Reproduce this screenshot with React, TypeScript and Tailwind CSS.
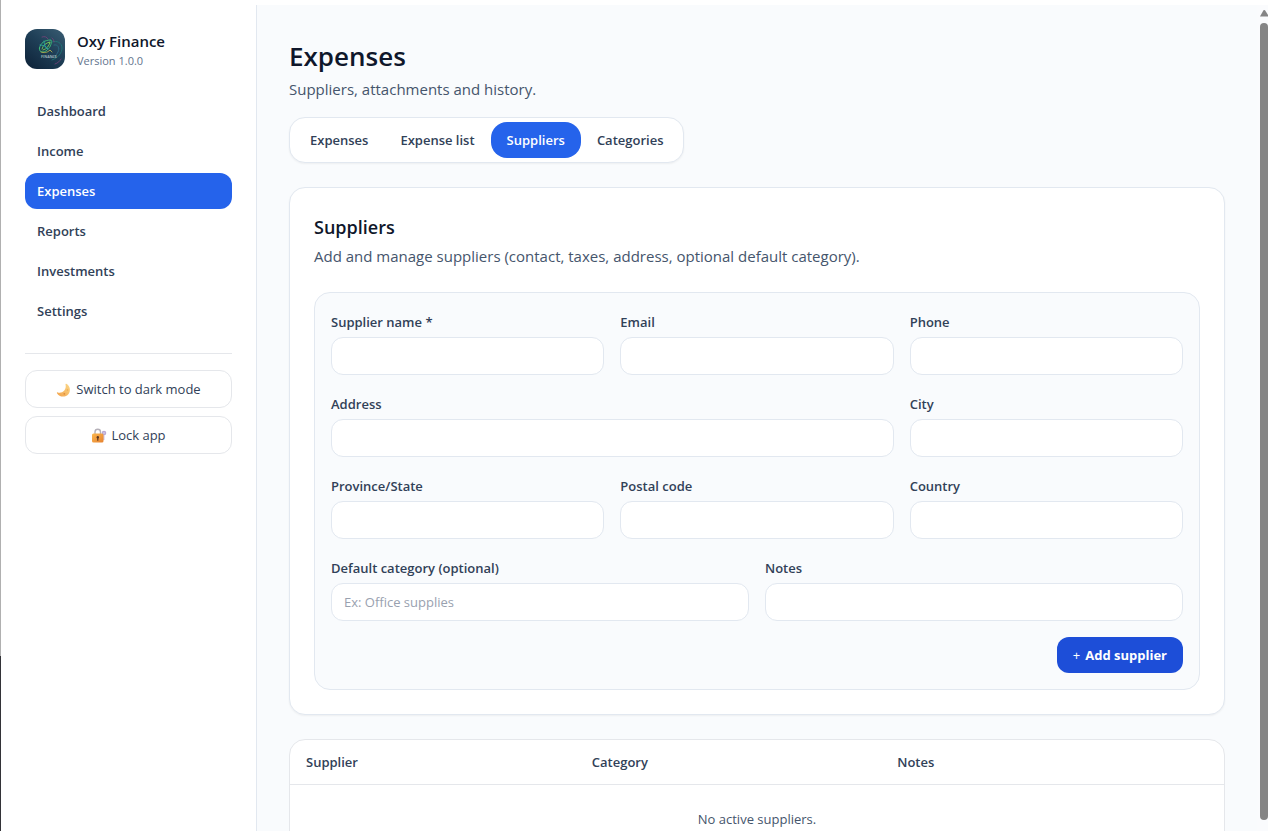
import type { ReactNode } from "react";

const navItems = ["Dashboard", "Income", "Expenses", "Reports", "Investments", "Settings"];
const tabs = ["Expenses", "Expense list", "Suppliers", "Categories"];

type FieldProps = {
  id: string;
  label: string;
  span: string;
  placeholder?: string;
  type?: string;
};

const fields: FieldProps[] = [
  { id: "name", label: "Supplier name *", span: "col-span-2" },
  { id: "email", label: "Email", span: "col-span-2", type: "email" },
  { id: "phone", label: "Phone", span: "col-span-2", type: "tel" },
  { id: "address", label: "Address", span: "col-span-4" },
  { id: "city", label: "City", span: "col-span-2" },
  { id: "province", label: "Province/State", span: "col-span-2" },
  { id: "postal", label: "Postal code", span: "col-span-2" },
  { id: "country", label: "Country", span: "col-span-2" },
  { id: "category", label: "Default category (optional)", span: "col-span-3", placeholder: "Ex: Office supplies" },
  { id: "notes", label: "Notes", span: "col-span-3" },
];

function Logo() {
  return (
    <svg viewBox="0 0 40 40" className="size-10 shrink-0 rounded-xl" aria-hidden="true">
      <defs>
        <linearGradient id="logo-bg" x1="1" y1="0" x2="0.2" y2="1">
          <stop offset="0" stopColor="#3a5d73" />
          <stop offset="0.5" stopColor="#1f3f57" />
          <stop offset="1" stopColor="#10263c" />
        </linearGradient>
      </defs>
      <rect width="40" height="40" fill="url(#logo-bg)" />
      <g fill="none" strokeWidth="0.9" strokeLinecap="round">
        <path d="M27 13c5-2 10 1 10 6s-4 10-10 12" stroke="#1f7f7a" opacity="0.85" />
        <path d="M29 16c4-1 6 3 4 7s-4 5-7 6" stroke="#2f7590" opacity="0.8" />
        <path d="M17 8c3-1 5 0 6 2M27 9c1 1 2 2 2 4M30 35c3-1 5-3 6-5" stroke="#8a4380" opacity="0.75" />
        <path d="M14.500 19c1-5 5-8 11.500-8 1 4-1 8-5 11-4 2-7 1-6.500-3z" stroke="#3fc07a" />
        <path d="M17 20c1-4 4-6 8-7-1 4-3 7-7 8" stroke="#7bcf55" />
        <path d="M15 16c3 0 6 1 8 4M19 12c0 3 1 6 3 8" stroke="#2ba5a0" />
        <path d="M16 23c3 1 6 1 9-2l2 2" stroke="#b0b04c" />
      </g>
      <text x="24" y="28.600" textAnchor="middle" fontSize="3.600" fontWeight="700" fill="#9db4b8" fontFamily="Open Sans, sans-serif">
        FINANCE
      </text>
    </svg>
  );
}

function MoonIcon() {
  return (
    <svg viewBox="0 0 16 16" className="size-4 shrink-0" aria-hidden="true">
      <defs>
        <linearGradient id="moon" x1="0" y1="1" x2="1" y2="0">
          <stop offset="0" stopColor="#f2a24a" />
          <stop offset="1" stopColor="#fbd98a" />
        </linearGradient>
      </defs>
      <path d="M10.200 1.700c3.900 1.800 4.900 7 2.400 10.200-3.100 3.800-9.200 3.500-11.600-.7-.3-.5.100-1 .7-.8 2.400.7 4.800.1 6.400-1.700 1.600-1.800 2-4.100 1.400-6.400-.1-.5.300-.8.700-.6z" fill="url(#moon)" />
      <circle cx="11.500" cy="8" r="0.800" fill="#eda850" />
      <circle cx="8.300" cy="11.800" r="0.900" fill="#e08d3c" />
    </svg>
  );
}

function LockIcon() {
  return (
    <svg viewBox="0 0 16 16" className="size-4 shrink-0" aria-hidden="true">
      <defs>
        <linearGradient id="lock" x1="0" y1="0" x2="1" y2="1">
          <stop offset="0" stopColor="#fbb84f" />
          <stop offset="1" stopColor="#e6812f" />
        </linearGradient>
      </defs>
      <circle cx="13" cy="5" r="1.700" fill="#cfc3e0" stroke="#b9a8d4" strokeWidth="1.200" />
      <path d="M12.800 7v5" stroke="#c9bbdd" strokeWidth="1.300" />
      <path d="M4 7V4a2.700 2.700 0 0 1 5.500 0V7" fill="none" stroke="#b5b0b8" strokeWidth="1.400" />
      <rect x="1" y="5.500" width="11.500" height="9" rx="1.500" fill="url(#lock)" />
      <circle cx="6.800" cy="9.200" r="1.200" fill="#5c3620" />
      <path d="M6.800 9.500v2.700" stroke="#5c3620" strokeWidth="1.200" strokeLinecap="round" />
    </svg>
  );
}

function SideButton({ icon, children }: { icon: ReactNode; children: ReactNode }) {
  return (
    <button
      type="button"
      className="flex h-[38px] w-full items-center justify-center gap-1 rounded-xl border border-[#e5e7eb] bg-white pt-px text-[13px] text-slate-700"
    >
      {icon}
      {children}
    </button>
  );
}

function Sidebar() {
  return (
    <aside className="w-64 shrink-0 border-r border-slate-200 bg-white p-6">
      <div className="flex items-center gap-3">
        <Logo />
        <div>
          <div className="text-[15px] leading-6 font-semibold text-slate-900">Oxy Finance</div>
          <div className="text-[11px] leading-4 text-slate-500">Version 1.0.0</div>
        </div>
      </div>
      <nav className="mt-6 flex flex-col gap-1">
        {navItems.map((item) => (
          <a
            key={item}
            href="#"
            aria-current={item === "Expenses" ? "page" : undefined}
            className={
              item === "Expenses"
                ? "rounded-xl bg-[#2563eb] px-3 py-2 text-[13px] leading-5 font-semibold text-white"
                : "rounded-xl px-3 py-2 text-[13px] leading-5 font-semibold text-slate-700"
            }
          >
            {item}
          </a>
        ))}
      </nav>
      <div className="mt-6 flex flex-col gap-2 border-t border-[#e5e7eb] pt-4">
        <SideButton icon={<MoonIcon />}>Switch to dark mode</SideButton>
        <SideButton icon={<LockIcon />}>Lock app</SideButton>
      </div>
    </aside>
  );
}

function Field({ id, label, span, placeholder, type = "text" }: FieldProps) {
  return (
    <div className={span}>
      <label htmlFor={id} className="mb-0.5 block text-[13px] leading-[26px] font-semibold text-slate-700">
        {label}
      </label>
      <input
        id={id}
        type={type}
        placeholder={placeholder}
        className="block h-[38px] w-full rounded-xl border border-slate-200 bg-white px-3 text-[13px] text-slate-900 placeholder:text-gray-400"
      />
    </div>
  );
}

function Scrollbar() {
  return (
    <div className="flex w-[11px] shrink-0 flex-col items-end overflow-hidden bg-[#fafbfd] pt-1 pb-[11px]" aria-hidden="true">
      <svg viewBox="0 0 8 8" className="mb-[6px] size-2 shrink-0">
        <path d="M0 7.500L3.500 1.300Q4.200.5 5 1.300L8 6v1.500z" fill="#858585" />
      </svg>
      <div className="w-2 grow rounded-full bg-[#858585]" />
    </div>
  );
}

export default function App() {
  return (
    <div className="flex h-screen overflow-hidden bg-white pt-[5px] font-['Open_Sans','Noto_Sans',sans-serif]">
      <div className="-mt-[5px] flex w-px shrink-0 flex-col" aria-hidden="true">
        <div className="grow-[79] bg-[#b0b0b0]" />
        <div className="grow-[21] bg-[#333338]" />
      </div>
      <Sidebar />
      <main className="min-w-0 grow overflow-hidden bg-[#f9fbfd] p-8">
        <h1 className="text-[26px] leading-[38px] font-semibold text-slate-900">Expenses</h1>
        <p className="mt-0.5 text-[15px] leading-6 text-slate-600">Suppliers, attachments and history.</p>

        <div
          role="tablist"
          className="mt-4 inline-flex rounded-2xl border border-slate-200 bg-white p-1 shadow-[0_1px_2px_rgba(0,0,0,0.05)]"
        >
          {tabs.map((tab) => (
            <button
              key={tab}
              type="button"
              role="tab"
              aria-selected={tab === "Suppliers"}
              className={
                tab === "Suppliers"
                  ? "rounded-2xl bg-[#2563eb] px-4 py-2 text-[13px] leading-5 font-semibold text-white"
                  : "rounded-2xl px-4 py-2 text-[13px] leading-5 font-semibold text-slate-700"
              }
            >
              {tab}
            </button>
          ))}
        </div>

        <section className="mt-6 rounded-2xl border border-slate-200 bg-white p-6 shadow-[0_1px_2px_rgba(0,0,0,0.05)]">
          <h2 className="text-[18px] leading-[30px] font-semibold text-slate-900">Suppliers</h2>
          <p className="mt-0.5 text-[15px] leading-6 text-slate-600">
            Add and manage suppliers (contact, taxes, address, optional default category).
          </p>
          <form className="mt-6 grid grid-cols-6 gap-4 rounded-2xl border border-slate-200 bg-[#f9fbfd] p-4">
            {fields.map((field) => (
              <Field key={field.id} {...field} />
            ))}
            <div className="col-span-6 flex justify-end">
              <button
                type="button"
                className="flex gap-[5px] rounded-xl bg-[#1d4ed8] px-4 py-2 text-[13px] leading-5 font-bold text-white"
              >
                <span className="font-medium">+</span>
                <span>Add supplier</span>
              </button>
            </div>
          </form>
        </section>

        <section className="mt-6 overflow-hidden rounded-2xl border border-[#e5e7eb] bg-white">
          <table className="w-full table-fixed text-left text-[13px] leading-5">
            <colgroup>
              <col className="w-[30.6%]" />
              <col className="w-[32.7%]" />
              <col />
            </colgroup>
            <thead>
              <tr className="border-b border-[#e5e7eb] text-slate-700">
                <th className="px-4 py-3 font-semibold">Supplier</th>
                <th className="px-4 py-3 font-semibold">Category</th>
                <th className="px-4 py-3 font-semibold">Notes</th>
              </tr>
            </thead>
            <tbody>
              <tr>
                <td colSpan={3} className="px-4 py-6 text-center text-slate-600">
                  No active suppliers.
                </td>
              </tr>
            </tbody>
          </table>
        </section>
      </main>
      <Scrollbar />
    </div>
  );
}
